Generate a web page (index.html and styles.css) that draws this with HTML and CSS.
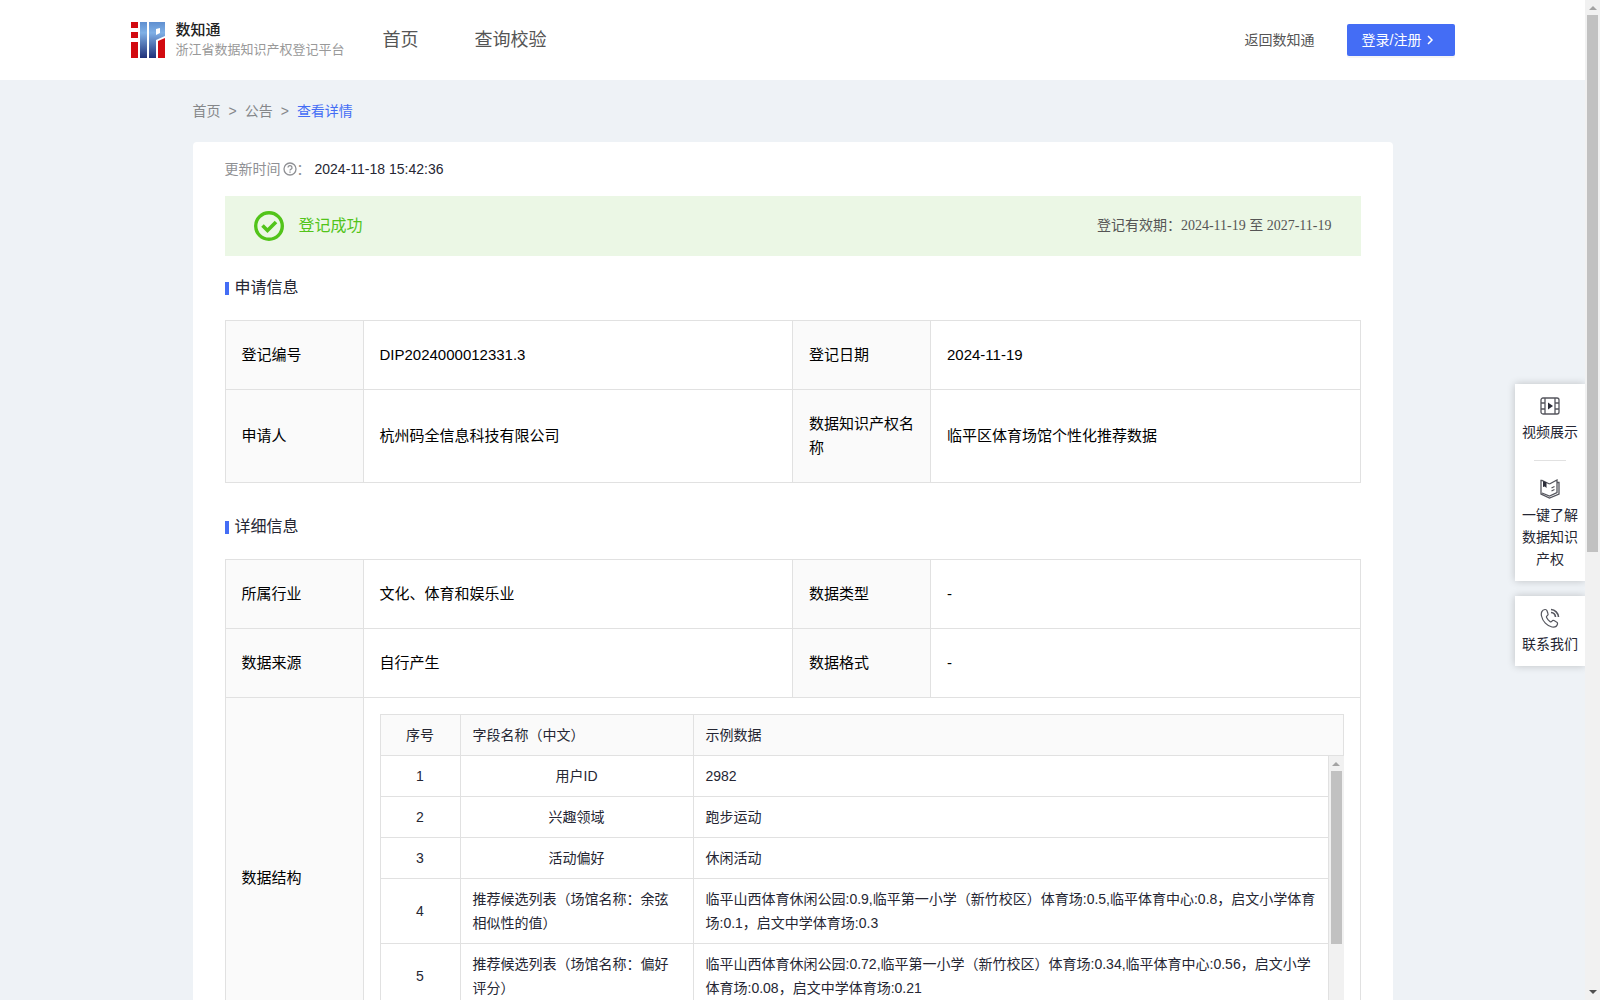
FILE: index.html
```html
<!DOCTYPE html>
<html lang="zh-CN">
<head>
	<meta charset="utf-8">
	<title>浙江省数据知识产权登记平台</title>
	<link rel="stylesheet" href="styles.css">
</head>
<body>
<div class="window">
	<div class="page">
		<header class="header">
			<div class="header-inner">
				<a class="logo" href="#">
					<svg width="34" height="36" viewBox="0 0 34 36">
						<defs>
							<linearGradient id="blue" x1="0" y1="0" x2="0" y2="36" gradientUnits="userSpaceOnUse">
								<stop offset="0" stop-color="#5f8fd0"/>
								<stop offset="0.3" stop-color="#7fb0e6"/>
								<stop offset="1" stop-color="#1f3079"/>
							</linearGradient>
						</defs>
						<path fill="#d20a10" d="M0 0h7v6H0zM0 10h7v6H0zM0 20h7v16H0zM27 19l7-3v20h-7z"/>
						<path fill="url(#blue)" d="M9 0h7v36H9z"/>
						<path fill="url(#blue)" fill-rule="evenodd" d="M18 0h16v14l-9 4v18h-7zM25 7v6l4-2V6z"/>
					</svg>
					<span class="logo-text">
						<strong>数知通</strong>
						<span>浙江省数据知识产权登记平台</span>
					</span>
				</a>
				<nav class="nav">
					<a href="#">首页</a>
					<a href="#">查询校验</a>
				</nav>
				<a class="back" href="#">返回数知通</a>
				<button class="login" type="button">登录/注册
					<svg width="14" height="14" viewBox="0 0 14 14" fill="none" stroke="#fff" stroke-width="1.5"><path d="M5 3l4 4-4 4"/></svg>
				</button>
			</div>
		</header>

		<main class="main">
			<div class="crumbs">
				<a href="#">首页</a><span>&gt;</span><a href="#">公告</a><span>&gt;</span><a class="current" href="#">查看详情</a>
			</div>

			<div class="card">
				<div class="update">
					<span class="update-label">更新时间</span>
					<svg width="14" height="14" viewBox="0 0 14 14" fill="none" stroke="#8f9094" stroke-width="1.3"><circle cx="7" cy="7" r="6"/><path d="M5 5.600a2 2 0 1 1 2.800 1.800q-.8.4-.8 1.200M7 9.600v1.200"/></svg>
					<span class="update-label">：</span>
					<span class="update-time">2024-11-18 15:42:36</span>
				</div>

				<div class="banner">
					<svg width="30" height="30" viewBox="0 0 30 30" fill="none" stroke="#52c41a"><circle cx="15" cy="15" r="13.3" stroke-width="3.400"/><path d="M8.500 14.500l5 5 8.500-8.500" stroke-width="3.600"/></svg>
					<span class="banner-status">登记成功</span>
					<span class="banner-date">登记有效期：2024-11-19 至 2027-11-19</span>
				</div>

				<h2 class="title">申请信息</h2>
				<table class="info">
					<colgroup><col class="col-label"><col><col class="col-label"><col></colgroup>
					<tr>
						<th>登记编号</th>
						<td>DIP2024000012331.3</td>
						<th>登记日期</th>
						<td>2024-11-19</td>
					</tr>
					<tr>
						<th>申请人</th>
						<td>杭州码全信息科技有限公司</td>
						<th>数据知识产权名称</th>
						<td>临平区体育场馆个性化推荐数据</td>
					</tr>
				</table>

				<h2 class="title">详细信息</h2>
				<table class="info">
					<colgroup><col class="col-label"><col><col class="col-label"><col></colgroup>
					<tr>
						<th>所属行业</th>
						<td>文化、体育和娱乐业</td>
						<th>数据类型</th>
						<td>-</td>
					</tr>
					<tr>
						<th>数据来源</th>
						<td>自行产生</td>
						<th>数据格式</th>
						<td>-</td>
					</tr>
					<tr>
						<th>数据结构</th>
						<td class="nested" colspan="3">
							<table class="fields fields-head">
								<colgroup><col class="col-no"><col class="col-name"><col></colgroup>
								<tr><th class="center">序号</th><th>字段名称（中文）</th><th>示例数据</th></tr>
							</table>
							<div class="fields-body">
								<table class="fields">
									<colgroup><col class="col-no"><col class="col-name"><col></colgroup>
									<tr><td class="center">1</td><td class="center">用户ID</td><td>2982</td></tr>
									<tr><td class="center">2</td><td class="center">兴趣领域</td><td>跑步运动</td></tr>
									<tr><td class="center">3</td><td class="center">活动偏好</td><td>休闲活动</td></tr>
									<tr><td class="center">4</td><td>推荐候选列表（场馆名称：余弦相似性的值）</td><td>临平山西体育休闲公园:0.9,临平第一小学（新竹校区）体育场:0.5,临平体育中心:0.8，启文小学体育场:0.1，启文中学体育场:0.3</td></tr>
									<tr><td class="center">5</td><td>推荐候选列表（场馆名称：偏好评分）</td><td>临平山西体育休闲公园:0.72,临平第一小学（新竹校区）体育场:0.34,临平体育中心:0.56，启文小学体育场:0.08，启文中学体育场:0.21</td></tr>
								</table>
								<div class="scrollbar">
									<i class="arrow-up"></i>
									<i class="thumb thumb-fields"></i>
								</div>
							</div>
						</td>
					</tr>
				</table>
			</div>
		</main>

		<aside class="side">
			<div class="side-box">
				<a href="#">
					<svg width="20" height="20" viewBox="0 0 20 20" fill="none" stroke="#55565e" stroke-width="1.3"><rect x="1" y="2" width="18" height="16" rx="2"/><path d="M5 2v16M15 2v16M1 7h4M1 13h4M15 7h4M15 13h4"/><path d="M8 6.500l5 3.500-5 3.500z" fill="#2b2c38" stroke="none"/></svg>
					视频展示
				</a>
				<hr>
				<a href="#">
					<svg width="20" height="20" viewBox="0 0 20 20" fill="none" stroke="#55565e" stroke-width="1.300"><path d="M9.500 5L2 1.500H1V15l8.500 4 9.500-4V3.500h-2M9.500 5L17 1v12.500L9.500 17 2 14M11.500 9l3-1.500M11.500 12l3-1.500"/><path d="M3 2l3.500 1.500V9L4.800 7.500 3 8z" fill="#2b2c38" stroke="none"/></svg>
					一键了解数据知识产权
				</a>
			</div>
			<div class="side-box">
				<a href="#">
					<svg width="20" height="20" viewBox="0 0 20 20" fill="none" stroke="#55565e" stroke-width="1.2"><path d="M5 1.500C2 2 .8 4.500 1.500 8c1.200 5.500 5.500 10 10.500 11 3 .5 5-1 5.500-3 .2-1-.2-1.600-1-2l-2.500-1.400c-.9-.5-1.600-.2-2.100.5-.6.8-1.200.9-2 .3C8.300 12.300 7.200 11 6.600 9.600c-.4-.9-.2-1.400.6-1.900.8-.5 1.100-1.200.8-2L7 2.800C6.700 1.900 6 1.400 5 1.500z"/><path d="M11 1.500a8 8 0 0 1 7.500 7.500M11 4.500A5 5 0 0 1 15.500 9" stroke-width="1.600"/></svg>
					联系我们
				</a>
			</div>
		</aside>
	</div>

	<div class="scrollbar">
		<i class="arrow-up"></i>
		<i class="thumb thumb-page"></i>
		<i class="arrow-down"></i>
	</div>
</div>
</body>
</html>
```
FILE: styles.css
```css
* {
	box-sizing: border-box;
}
body {
	margin: 0;
	font-family: "Liberation Sans", "Noto Sans CJK SC", sans-serif;
	font-size: 14px;
	line-height: 24px;
	color: #252633;
	background: #eef2f6;
}
a {
	color: inherit;
	text-decoration: none;
}
svg {
	display: block;
	flex: none;
}
.window {
	display: flex;
	height: 100vh;
	overflow: hidden;
}
.page {
	position: relative;
	flex: 1;
	min-width: 0;
	overflow: hidden;
}

/* header */
.header {
	background: #fff;
}
.header-inner {
	display: flex;
	align-items: center;
	max-width: 1324px;
	height: 80px;
	margin: 0 auto;
	color: #555;
}
.logo {
	display: flex;
	align-items: center;
	gap: 11px;
}
.logo-text {
	display: flex;
	flex-direction: column;
	font-size: 13px;
	line-height: 20px;
	color: #999;
}
.logo-text strong {
	font-size: 15px;
	font-weight: 500;
	color: #222;
}
.nav {
	display: flex;
	gap: 56px;
	flex: 1;
	margin-left: 38px;
	font-size: 18px;
}
.login {
	display: flex;
	align-items: center;
	width: 108px;
	height: 32px;
	margin-left: 32px;
	padding: 0 15px;
	gap: 2px;
	border: 0;
	border-radius: 2px;
	font: inherit;
	color: #fff;
	background: #446df5;
	box-shadow: 0 2px 0 rgba(0, 0, 0, 0.04);
	white-space: nowrap;
}

/* content */
.main {
	max-width: 1200px;
	margin: 0 auto;
}
.crumbs {
	padding: 19px 0;
	color: #85878a;
}
.crumbs span {
	margin: 0 8px;
}
.crumbs .current {
	color: #446df5;
}
.card {
	padding: 15px 32px;
	border-radius: 4px;
	background: #fff;
}
.update {
	display: flex;
	align-items: center;
}
.update svg {
	margin-left: 2px;
}
.update-label {
	color: #8f9094;
}
.update-time {
	margin-left: 4px;
}
.banner {
	display: flex;
	align-items: center;
	height: 60px;
	margin-top: 15px;
	padding: 0 29px;
	background: #ebf7e5;
}
.banner-status {
	flex: 1;
	margin-left: 15px;
	font-size: 16px;
	color: #52c41a;
}
.banner-date {
	font-family: "Liberation Serif", "Noto Sans CJK SC", serif;
	color: #555;
}
.title {
	display: flex;
	align-items: center;
	margin: 20px 0;
	font-size: 16px;
	font-weight: 400;
	line-height: 24px;
}
.title::before {
	content: "";
	width: 4px;
	height: 13px;
	margin-right: 6px;
	background: #446df5;
}

/* tables */
table {
	width: 100%;
	border-collapse: collapse;
	table-layout: fixed;
}
th, td {
	border: 1px solid #e1e1e1;
	font-weight: 400;
	text-align: left;
}
th {
	background: #fafafa;
}
.info {
	margin-bottom: 32px;
	font-size: 15px;
	color: #000;
}
.info th, .info td {
	padding: 22px 16px;
}
.col-label {
	width: 138px;
}
.info .nested {
	padding: 16px;
}
.fields {
	font-size: 14px;
	color: #252633;
}
.info .fields th, .info .fields td {
	padding: 8px 12px;
}
.info .fields .center {
	text-align: center;
}
.col-no {
	width: 80px;
}
.col-name {
	width: 233px;
}
.fields-body {
	display: flex;
	align-items: flex-start;
	height: 286px;
	overflow: hidden;
}
.fields-body .fields {
	flex: 1;
}
.fields-body tr:first-child td {
	border-top: 0;
}

/* scrollbars */
.scrollbar {
	display: flex;
	flex-direction: column;
	align-items: center;
	flex: none;
	width: 15px;
	height: 100%;
	background: #f1f1f1;
}
.arrow-up, .arrow-down {
	border: 4px solid transparent;
}
.arrow-up {
	margin: 2px 0 5px;
	border-bottom-color: #a3a3a3;
}
.arrow-down {
	margin: auto 0 2px;
	border-top-color: #505050;
}
.thumb {
	width: 11px;
	background: #c1c1c1;
}
.thumb-page {
	height: 537px;
}
.thumb-fields {
	height: 173px;
}

/* floating links at the right edge */
.side {
	position: absolute;
	top: 384px;
	right: 0;
	width: 70px;
}
.side-box {
	margin-bottom: 15px;
	padding: 12px 7px 11px;
	line-height: 22px;
	text-align: center;
	background: #fff;
	box-shadow: 0 0 8px rgba(0, 0, 0, 0.2);
}
.side-box a {
	display: block;
}
.side-box svg {
	margin: 0 auto 5px;
}
.side-box hr {
	width: 32px;
	height: 1px;
	margin: 17px auto 18px;
	border: 0;
	background: #e1e1e1;
}
```
